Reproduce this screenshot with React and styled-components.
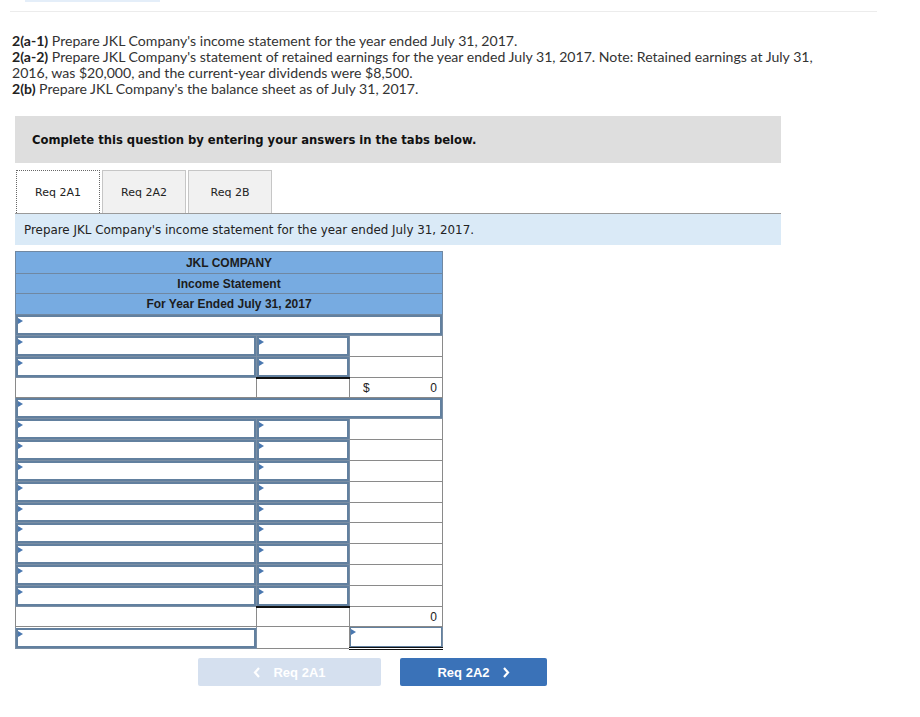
import React from 'react'
import styled, { createGlobalStyle } from 'styled-components'

const GlobalStyle = createGlobalStyle`
    body {
        margin: 0;
        background: #fff;
        font-family: "Lato", "Open Sans", sans-serif;
        color: #333;
    }
`

const Page = styled.div`
    width: 920px;
    height: 717px;
    position: relative;
    overflow: hidden;
`

const TopStrip = styled.div`
    margin-left: 25px;
    width: 135px;
    height: 2px;
    background: #e4eef9;
`

const Rule = styled.div`
    margin: 9px 43px 0 10px;
    height: 1px;
    background: #ececec;
`

const Question = styled.div`
    margin: 21px 0 0 12px;
    width: 832px;
    font-size: 14.1px;
    line-height: 16px;
    color: #333;

    b {
        color: #222;
    }
`

const Prompt = styled.div`
    margin: 19px 0 0 15px;
    width: 766px;
    height: 47px;
    background: #dedede;
    display: flex;
    align-items: center;
    padding-left: 17px;
    box-sizing: border-box;
    font-family: "DejaVu Sans", Verdana, sans-serif;
    font-weight: bold;
    font-size: 11.6px;
    color: #111;
`

const Tabs = styled.div`
    margin: 7px 0 0 16px;
    display: flex;
    gap: 2px;
    height: 43px;
`

const Tab = styled.div`
    width: 84px;
    height: 43px;
    box-sizing: border-box;
    display: flex;
    align-items: center;
    justify-content: center;
    font-family: "DejaVu Sans", Verdana, sans-serif;
    font-size: 11px;
    color: #222;
    background: ${p => (p.active ? '#fff' : '#f1f1f1')};
    border: ${p => (p.active ? '1px dotted #666' : '1px solid #c6c6c6')};
    border-bottom: none;
`

const Instruction = styled.div`
    margin-left: 15px;
    width: 766px;
    height: 32px;
    box-sizing: border-box;
    background: #daeaf7;
    border-top: 1px solid #9a9a9a;
    display: flex;
    align-items: center;
    padding-left: 9px;
    font-family: "DejaVu Sans", Verdana, sans-serif;
    font-size: 11.9px;
    color: #222;
`

const Sheet = styled.table`
    margin: 6px 0 0 15px;
    border-collapse: collapse;
    table-layout: fixed;
    width: 427px;
    font-family: "Liberation Sans", Arial, sans-serif;
    font-size: 12px;
`

const HeadCell = styled.td`
    background: #77abe1;
    border: 1px solid #7088a2;
    height: ${p => p.h}px;
    padding: 0;
    text-align: center;
    font-weight: bold;
    color: #1c1c1c;
`

const Cell = styled.td`
    border: 1px solid #8a8a8a;
    border-top: ${p => (p.rule ? '2px solid #111' : '1px solid #8a8a8a')};
    height: 19.9px;
    padding: 0 5px;
    box-sizing: border-box;
    text-align: right;
    color: #222;
`

const InputCell = styled.td`
    border: 1px solid #7a8ea4;
    border-bottom: ${p => (p.double ? '3px double #111' : '1px solid #7a8ea4')};
    height: 19.9px;
    padding: 0;
`

const Input = styled.div`
    position: relative;
    height: 19.9px;
    box-sizing: border-box;
    border: ${p => (p.thin ? '1px' : '2px')} solid #62809f;
    background: #fff;

    &::before {
        content: '';
        position: absolute;
        left: 0;
        top: 1px;
        border-left: 5px solid #4a78b0;
        border-top: 3px solid transparent;
        border-bottom: 3px solid transparent;
    }
`

const Total = styled.div`
    display: flex;
    justify-content: space-between;
    padding-left: 8px;
`

const Nav = styled.div`
    margin: 8px 0 0 198px;
    display: flex;
    gap: 19px;
`

const NavButton = styled.div`
    width: ${p => p.w}px;
    height: 28px;
    border-radius: 2px;
    display: flex;
    align-items: center;
    justify-content: center;
    gap: 12px;
    font-family: "Liberation Sans", Arial, sans-serif;
    font-weight: bold;
    font-size: 13px;
    color: #fff;
    background: ${p => (p.disabled ? '#d5e0ef' : '#3a72b8')};
`

const Chevron = ({ dir }) => (
    <svg width="8" height="11" viewBox="0 0 8 11">
        <path
            d={dir === 'left' ? 'M6 1 L2 5.5 L6 10' : 'M2 1 L6 5.5 L2 10'}
            fill="none"
            stroke="#fff"
            strokeWidth="2.2"
        />
    </svg>
)

const lineRows = (n) => Array.from({ length: n })

const App = () => {
    return (
        <Page>
            <GlobalStyle />
            <TopStrip />
            <Rule />
            <Question>
                <b>2(a-1)</b> Prepare JKL Company's income statement for the year ended July 31, 2017.
                <br />
                <b>2(a-2)</b> Prepare JKL Company's statement of retained earnings for the year ended July 31, 2017. Note: Retained earnings at July 31, 2016, was $20,000, and the current-year dividends were $8,500.
                <br />
                <b>2(b)</b> Prepare JKL Company's the balance sheet as of July 31, 2017.
            </Question>
            <Prompt>Complete this question by entering your answers in the tabs below.</Prompt>
            <Tabs>
                <Tab active>Req 2A1</Tab>
                <Tab>Req 2A2</Tab>
                <Tab>Req 2B</Tab>
            </Tabs>
            <Instruction>Prepare JKL Company's income statement for the year ended July 31, 2017.</Instruction>
            <Sheet>
                <colgroup>
                    <col style={{ width: 241 }} />
                    <col style={{ width: 93 }} />
                    <col style={{ width: 93 }} />
                </colgroup>
                <tbody>
                    <tr><HeadCell colSpan={3} h={21}>JKL COMPANY</HeadCell></tr>
                    <tr><HeadCell colSpan={3} h={19}>Income Statement</HeadCell></tr>
                    <tr><HeadCell colSpan={3} h={20}>For Year Ended July 31, 2017</HeadCell></tr>
                    <tr><InputCell colSpan={3}><Input /></InputCell></tr>
                    {lineRows(2).map((_, i) => (
                        <tr key={'a' + i}>
                            <InputCell><Input /></InputCell>
                            <InputCell><Input /></InputCell>
                            <Cell />
                        </tr>
                    ))}
                    <tr>
                        <Cell />
                        <Cell rule />
                        <Cell><Total><span>$</span><span>0</span></Total></Cell>
                    </tr>
                    <tr><InputCell colSpan={3}><Input /></InputCell></tr>
                    {lineRows(9).map((_, i) => (
                        <tr key={'b' + i}>
                            <InputCell><Input /></InputCell>
                            <InputCell><Input /></InputCell>
                            <Cell />
                        </tr>
                    ))}
                    <tr>
                        <Cell />
                        <Cell rule />
                        <Cell>0</Cell>
                    </tr>
                    <tr>
                        <InputCell><Input /></InputCell>
                        <Cell />
                        <InputCell double><Input thin /></InputCell>
                    </tr>
                </tbody>
            </Sheet>
            <Nav>
                <NavButton w={183} disabled><Chevron dir="left" />Req 2A1</NavButton>
                <NavButton w={147}>Req 2A2<Chevron dir="right" /></NavButton>
            </Nav>
        </Page>
    )
}

export default App
